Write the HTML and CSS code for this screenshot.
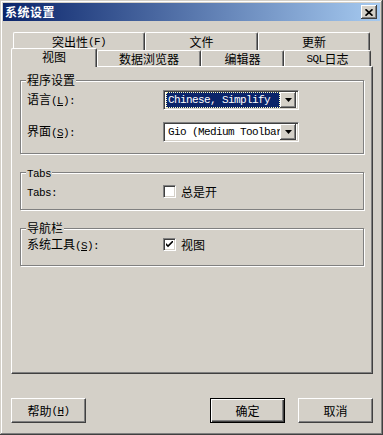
FILE: index.html
```html
<!DOCTYPE html>
<html lang="zh-CN">
<head>
<meta charset="utf-8">
<title>系统设置</title>
<link rel="stylesheet" href="styles.css">
</head>
<body>
<div class="window">
  <div class="titlebar">
    <span class="title">系统设置</span>
    <span class="close"><svg width="8" height="7" viewBox="0 0 8 7"><path d="M0.5 0.3 L7.5 6.7 M7.5 0.3 L0.5 6.7" stroke="#000" stroke-width="1.7" fill="none"/></svg></span>
  </div>
  <div class="content">
    <div class="tabrow back">
      <div class="tab w1">突出性<span class="en">(F)</span></div>
      <div class="tab w2">文件</div>
      <div class="tab w3">更新</div>
    </div>
    <div class="tabrow front">
      <div class="tab f1 active">视图</div>
      <div class="tab f2">数据浏览器</div>
      <div class="tab f3">编辑器</div>
      <div class="tab f4"><span class="en">SQL</span>日志</div>
    </div>
    <div class="panel">
      <fieldset class="group g1">
        <legend>程序设置</legend>
        <div class="row">
          <span class="label">语言<span class="en">(<u>L</u>):</span></span>
          <div class="select">
            <span class="value sel"><span class="en">Chinese, Simplify</span></span>
            <span class="drop"><svg width="7" height="4" viewBox="0 0 7 4"><path d="M0 0H7L3.5 4Z" fill="#000"/></svg></span>
          </div>
        </div>
        <div class="row row2">
          <span class="label">界面<span class="en">(<u>S</u>):</span></span>
          <div class="select">
            <span class="value"><span class="en">Gio (Medium Toolbar</span></span>
            <span class="drop"><svg width="7" height="4" viewBox="0 0 7 4"><path d="M0 0H7L3.5 4Z" fill="#000"/></svg></span>
          </div>
        </div>
      </fieldset>
      <fieldset class="group g2">
        <legend><span class="en">Tabs</span></legend>
        <div class="row crow">
          <span class="label"><span class="en">Tabs:</span></span>
          <span class="check"></span>
          <span class="ctext">总是开</span>
        </div>
      </fieldset>
      <fieldset class="group g3">
        <legend>导航栏</legend>
        <div class="row crow">
          <span class="label">系统工具<span class="en">(<u>S</u>):</span></span>
          <span class="check"><svg width="7" height="7" viewBox="0 0 7 7"><path d="M0 2 L2 4 L7 -1 L7 1.2 L2 6.2 L0 4.2 Z" fill="#000"/></svg></span>
          <span class="ctext">视图</span>
        </div>
      </fieldset>
    </div>
    <div class="buttons">
      <div class="btn">帮助<span class="en">(<u>H</u>)</span></div>
      <div class="spacer"></div>
      <div class="btn default">确定</div>
      <div class="btn">取消</div>
    </div>
  </div>
</div>
</body>
</html>
```
FILE: styles.css
```css
* { box-sizing: border-box; }
html, body { margin: 0; padding: 0; }
body {
  width: 383px;
  height: 435px;
  overflow: hidden;
  background: #D4D0C8;
  font-family: "Noto Sans CJK SC", "Noto Sans", sans-serif;
  font-size: 12px;
  line-height: 12px;
  color: #000;
}
.en {
  font-family: "Liberation Mono", "DejaVu Sans Mono", monospace;
  font-size: 11px;
  letter-spacing: -0.6px;
}
u { text-decoration: underline; text-underline-offset: 1px; }

.window {
  width: 383px;
  height: 435px;
  padding: 3px;
  background: #D4D0C8;
  box-shadow: inset -1px -1px 0 #404040, inset 1px 1px 0 #D4D0C8,
              inset -2px -2px 0 #808080, inset 2px 2px 0 #fff;
}
.titlebar {
  height: 18px;
  display: flex;
  align-items: center;
  justify-content: space-between;
  padding: 0 3px 0 2px;
  background: linear-gradient(to right, #0A246A, #A6CAF0);
}
.title {
  color: #fff;
  font-weight: bold;
  font-size: 12px;
  letter-spacing: 0.5px;
}
.close {
  width: 16px;
  height: 14px;
  display: flex;
  align-items: center;
  justify-content: center;
  background: #D4D0C8;
  box-shadow: inset -1px -1px 0 #404040, inset 1px 1px 0 #fff, inset -2px -2px 0 #808080;
}

.content { padding: 11px 7px 0 8px; }

.tabrow { display: flex; }
.tabrow.back { height: 18px; margin-left: 2px; }
.tabrow.front { height: 18px; margin-top: -2px; align-items: flex-end; }
.tab {
  background: #D4D0C8;
  border-top: 1px solid #fff;
  border-left: 1px solid #fff;
  border-right: 1px solid #404040;
  box-shadow: inset -1px 0 0 #808080;
  border-radius: 2px 2px 0 0;
  display: flex;
  align-items: center;
  justify-content: center;
  height: 18px;
}
.tabrow.front .tab { height: 16px; padding-top: 1px; }
.tabrow.front .tab.active {
  height: 19px;
  margin-bottom: -1px;
  position: relative;
  z-index: 2;
  padding-top: 0;
  padding-bottom: 3px;
}
.w1 { width: 132px; }
.w2 { width: 113px; }
.w3 { width: 112px; }
.f1 { width: 86px; }
.f2 { width: 104px; }
.f3 { width: 83px; }
.f4 { width: 87px; }

.panel {
  width: 362px;
  height: 308px;
  border: 1px solid;
  border-color: #fff #404040 #404040 #fff;
  box-shadow: inset -1px -1px 0 #808080;
  padding: 7px 8px 0 8px;
}

.group {
  margin: 0;
  min-inline-size: 0;
  border: 1px solid #808080;
  box-shadow: 1px 1px 0 #fff, inset 1px 1px 0 #fff;
  padding: 0 6px;
}
.group legend {
  padding: 0 1px;
  margin-left: -1px;
  line-height: 12px;
  height: 12px;
  background: #D4D0C8;
}
.g1 { padding-top: 4px; padding-bottom: 11px; }
.g2 { margin-top: 12px; padding-top: 7px; padding-bottom: 11px; }
.g3 { margin-top: 12px; padding-top: 4px; padding-bottom: 14px; }

.row { display: flex; align-items: center; height: 20px; }
.row2 { margin-top: 12px; }
.crow { height: 13px; }
.label { width: 136px; white-space: nowrap; }

.select {
  width: 136px;
  height: 20px;
  display: flex;
  align-items: center;
  padding: 2px;
  background: #fff;
  border: 1px solid;
  border-color: #808080 #fff #fff #808080;
  box-shadow: inset 1px 1px 0 #404040, inset -1px -1px 0 #D4D0C8;
}
.value {
  flex: 1;
  height: 16px;
  display: flex;
  align-items: center;
  padding-left: 2px;
  overflow: hidden;
  white-space: nowrap;
}
.value.sel {
  background: #0A246A;
  color: #fff;
  outline: 1px dotted #FFFFC0;
  outline-offset: -1px;
}
.drop {
  width: 16px;
  height: 16px;
  flex: none;
  display: flex;
  align-items: center;
  justify-content: center;
  background: #D4D0C8;
  box-shadow: inset -1px -1px 0 #404040, inset 1px 1px 0 #fff, inset -2px -2px 0 #808080;
}

.check {
  width: 13px;
  height: 13px;
  flex: none;
  display: flex;
  align-items: center;
  justify-content: center;
  background: #fff;
  border: 1px solid;
  border-color: #808080 #fff #fff #808080;
  box-shadow: inset 1px 1px 0 #404040, inset -1px -1px 0 #D4D0C8;
}
.ctext { margin-left: 5px; }

.buttons {
  display: flex;
  margin-top: 24px;
  gap: 13px;
}
.spacer { flex: 1; }
.btn {
  width: 75px;
  height: 25px;
  display: flex;
  align-items: center;
  justify-content: center;
  background: #D4D0C8;
  border: 1px solid;
  border-color: #fff #404040 #404040 #fff;
  box-shadow: inset -1px -1px 0 #808080;
}
.btn.default {
  border-color: #000;
  box-shadow: inset 1px 1px 0 #fff, inset -1px -1px 0 #404040, inset -2px -2px 0 #808080;
}
```
